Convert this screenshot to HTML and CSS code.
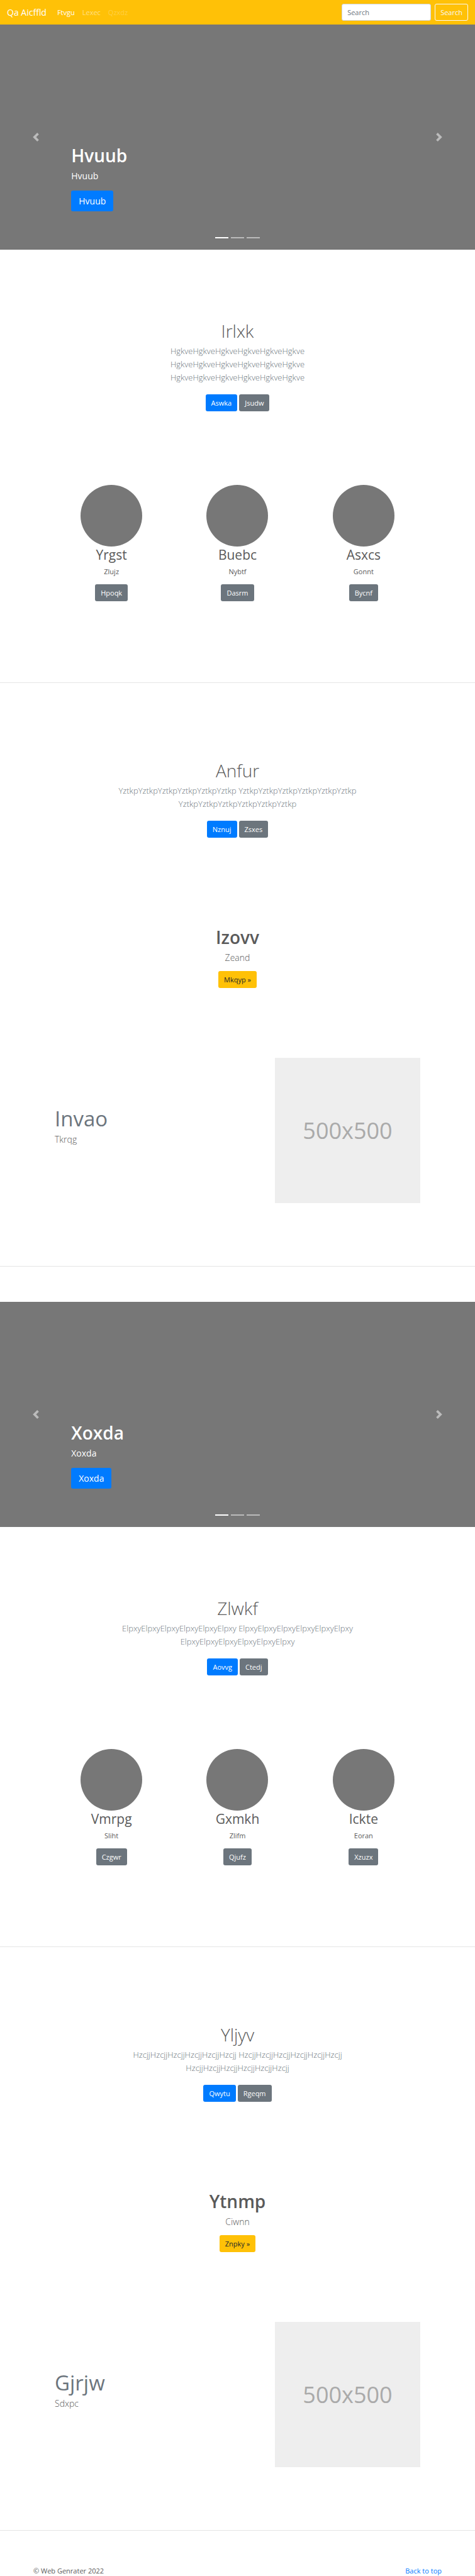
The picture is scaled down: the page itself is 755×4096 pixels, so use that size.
FILE: index.html
```html
<!DOCTYPE html>
<html lang="en">
<head>
<meta charset="utf-8">
<meta name="viewport" content="width=device-width, initial-scale=1">
<title>Qa Aicffld</title>
<link rel="stylesheet" href="styles.css">
</head>
<body>
<header class="navbar" id="top">
  <a class="brand" href="#">Qa Aicffld</a>
  <nav class="nav-links">
    <a class="nav-link active" href="#">Ftvgu</a>
    <a class="nav-link" href="#">Lexec</a>
    <a class="nav-link disabled" href="#">Qzxdz</a>
  </nav>
  <form class="search">
    <input class="search-input" type="search" placeholder="Search" aria-label="Search">
    <button class="btn btn-outline" type="button">Search</button>
  </form>
</header>
<main>
  <section class="carousel">
    <button class="carousel-control prev" type="button" aria-label="Previous">
      <svg class="chevron" viewBox="0 0 8 8"><path d="M5.25 0l-4 4 4 4 1.5-1.5L4.25 4l2.5-2.5L5.25 0z"/></svg>
    </button>
    <div class="caption">
      <h1 class="caption-title">Hvuub</h1>
      <p class="caption-text">Hvuub</p>
      <a class="btn btn-primary btn-lg" href="#">Hvuub</a>
    </div>
    <button class="carousel-control next" type="button" aria-label="Next">
      <svg class="chevron" viewBox="0 0 8 8"><path d="M2.75 0l-1.5 1.5L3.75 4l-2.5 2.5L2.75 8l4-4-4-4z"/></svg>
    </button>
    <div class="indicators"><span class="bar on"></span><span class="bar"></span><span class="bar"></span></div>
  </section>

  <section class="intro after-carousel">
    <h1 class="title light">Irlxk</h1>
    <p class="lead muted">HgkveHgkveHgkveHgkveHgkveHgkve HgkveHgkveHgkveHgkveHgkveHgkve HgkveHgkveHgkveHgkveHgkveHgkve</p>
    <div class="actions"><a class="btn btn-primary" href="#">Aswka</a><a class="btn btn-secondary" href="#">Jsudw</a></div>
  </section>

  <section class="trio">
    <article class="member"><div class="avatar"></div><h2 class="member-name">Yrgst</h2><p class="member-text">Zlujz</p><a class="btn btn-secondary" href="#">Hpoqk</a></article>
    <article class="member"><div class="avatar"></div><h2 class="member-name">Buebc</h2><p class="member-text">Nybtf</p><a class="btn btn-secondary" href="#">Dasrm</a></article>
    <article class="member"><div class="avatar"></div><h2 class="member-name">Asxcs</h2><p class="member-text">Gonnt</p><a class="btn btn-secondary" href="#">Bycnf</a></article>
  </section>
  <hr class="rule">

  <section class="intro after-rule">
    <h1 class="title light">Anfur</h1>
    <p class="lead muted">YztkpYztkpYztkpYztkpYztkpYztkp YztkpYztkpYztkpYztkpYztkpYztkp YztkpYztkpYztkpYztkpYztkpYztkp</p>
    <div class="actions"><a class="btn btn-primary" href="#">Nznuj</a><a class="btn btn-secondary" href="#">Zsxes</a></div>
  </section>

  <section class="callout">
    <h1 class="title strong">Izovv</h1>
    <p class="lead">Zeand</p>
    <a class="btn btn-warning" href="#">Mkqyp »</a>
  </section>

  <section class="featurette">
    <div class="featurette-copy">
      <h2 class="featurette-title">Invao</h2>
      <p class="lead">Tkrqg</p>
    </div>
    <div class="placeholder">500x500</div>
  </section>
  <hr class="rule">

  <section class="carousel spaced">
    <button class="carousel-control prev" type="button" aria-label="Previous">
      <svg class="chevron" viewBox="0 0 8 8"><path d="M5.25 0l-4 4 4 4 1.5-1.5L4.25 4l2.5-2.5L5.25 0z"/></svg>
    </button>
    <div class="caption">
      <h1 class="caption-title">Xoxda</h1>
      <p class="caption-text">Xoxda</p>
      <a class="btn btn-primary btn-lg" href="#">Xoxda</a>
    </div>
    <button class="carousel-control next" type="button" aria-label="Next">
      <svg class="chevron" viewBox="0 0 8 8"><path d="M2.75 0l-1.5 1.5L3.75 4l-2.5 2.5L2.75 8l4-4-4-4z"/></svg>
    </button>
    <div class="indicators"><span class="bar on"></span><span class="bar"></span><span class="bar"></span></div>
  </section>

  <section class="intro after-carousel">
    <h1 class="title light">Zlwkf</h1>
    <p class="lead muted">ElpxyElpxyElpxyElpxyElpxyElpxy ElpxyElpxyElpxyElpxyElpxyElpxy ElpxyElpxyElpxyElpxyElpxyElpxy</p>
    <div class="actions"><a class="btn btn-primary" href="#">Aovvg</a><a class="btn btn-secondary" href="#">Ctedj</a></div>
  </section>

  <section class="trio">
    <article class="member"><div class="avatar"></div><h2 class="member-name">Vmrpg</h2><p class="member-text">Sliht</p><a class="btn btn-secondary" href="#">Czgwr</a></article>
    <article class="member"><div class="avatar"></div><h2 class="member-name">Gxmkh</h2><p class="member-text">Zlifm</p><a class="btn btn-secondary" href="#">Qjufz</a></article>
    <article class="member"><div class="avatar"></div><h2 class="member-name">Ickte</h2><p class="member-text">Eoran</p><a class="btn btn-secondary" href="#">Xzuzx</a></article>
  </section>
  <hr class="rule">

  <section class="intro after-rule">
    <h1 class="title light">Yljyv</h1>
    <p class="lead muted">HzcjjHzcjjHzcjjHzcjjHzcjjHzcjj HzcjjHzcjjHzcjjHzcjjHzcjjHzcjj HzcjjHzcjjHzcjjHzcjjHzcjjHzcjj</p>
    <div class="actions"><a class="btn btn-primary" href="#">Qwytu</a><a class="btn btn-secondary" href="#">Rgeqm</a></div>
  </section>

  <section class="callout">
    <h1 class="title strong">Ytnmp</h1>
    <p class="lead">Ciwnn</p>
    <a class="btn btn-warning" href="#">Znpky »</a>
  </section>

  <section class="featurette">
    <div class="featurette-copy">
      <h2 class="featurette-title">Gjrjw</h2>
      <p class="lead">Sdxpc</p>
    </div>
    <div class="placeholder">500x500</div>
  </section>
  <hr class="rule">
</main>
<footer class="footer">
  <span>© Web Genrater 2022</span>
  <a class="footer-link" href="#top">Back to top</a>
</footer>
</body>
</html>
```

FILE: styles.css
```css
*, *::before, *::after { box-sizing: border-box; }

body {
  margin: 0;
  background: #fff;
  color: #5a5a5a;
  font-family: "Open Sans", "Noto Sans", sans-serif;
  font-size: 11px;
  line-height: 17px;
}

h1, h2, p { margin: 0; }
a { text-decoration: none; }

/* Navbar */
.navbar {
  display: flex;
  align-items: center;
  padding: 6px 11px;
  background: #ffc107;
}
.brand { margin-right: 11px; color: #fff; font-size: 14px; line-height: 21px; }
.nav-links { display: flex; flex: 1; }
.nav-link { padding: 5px 6px; color: rgba(255, 255, 255, .5); }
.nav-link.active { color: #fff; }
.nav-link.disabled { color: rgba(255, 255, 255, .25); }
.search { display: flex; gap: 6px; }
.search-input {
  width: 142px;
  padding: 4px 8px;
  border: 1px solid #ced4da;
  border-radius: 3px;
  background: #fff;
  color: #495057;
  font: inherit;
  appearance: none;
}
.search-input::placeholder { color: #6c757d; opacity: 1; }

/* Buttons */
.btn {
  display: inline-block;
  padding: 4px 8px;
  border: 1px solid transparent;
  border-radius: 3px;
  color: #fff;
  font: inherit;
}
.btn-primary { background: #007bff; }
.btn-secondary { background: #6c757d; }
.btn-warning { background: #ffc107; color: #212529; }
.btn-outline { background: transparent; border-color: #f8f9fa; color: #f8f9fa; }
.btn-lg { padding: 5px 11px; font-size: 14px; line-height: 21px; }

/* Carousel */
.carousel {
  position: relative;
  display: flex;
  min-height: 358px;
  background: #777;
}
.carousel.spaced { margin-top: 56px; }
.carousel-control {
  display: flex;
  align-items: center;
  justify-content: center;
  width: 15%;
  padding: 0;
  border: 0;
  background: none;
  opacity: .5;
}
.chevron { width: 14px; height: 14px; fill: #fff; }
.caption {
  display: flex;
  flex: 1;
  flex-direction: column;
  align-items: flex-start;
  justify-content: flex-end;
  padding-bottom: 61px;
  color: #fff;
}
.caption-title { margin-bottom: 5px; font-size: 28px; font-weight: 600; line-height: 34px; }
.caption-text { margin-bottom: 13px; font-size: 14px; line-height: 21px; }
.indicators {
  position: absolute;
  right: 0;
  bottom: 18px;
  left: 0;
  display: flex;
  justify-content: center;
  gap: 4px;
}
.bar { width: 21px; height: 2px; background: #fff; opacity: .5; }
.bar.on { opacity: 1; }

/* Text sections */
.intro { max-width: 404px; margin: 0 auto; text-align: center; }
.after-carousel { padding: 112px 0 117px; }
.after-rule { padding: 122px 0 141px; }
.title { margin-bottom: 5px; font-size: 28px; line-height: 34px; }
.light { font-weight: 300; }
.strong { font-weight: 600; }
.lead { font-size: 14px; font-weight: 300; line-height: 21px; }
.muted { color: #6c757d; font-size: 13px; }
.actions { display: flex; justify-content: center; gap: 3px; margin-top: 16px; }
.callout { padding-bottom: 111px; text-align: center; }
.callout .lead { margin-bottom: 11px; }

/* Three columns */
.trio {
  display: grid;
  grid-template-columns: repeat(3, 1fr);
  padding: 0 77px 129px;
  text-align: center;
}
.avatar { width: 98px; height: 98px; margin: 0 auto; border-radius: 50%; background: #777; }
.member-name { margin-bottom: 5px; font-size: 21px; font-weight: 400; line-height: 26px; }
.member-text { margin-bottom: 12px; }

.rule { height: 1px; margin: 0; border: 0; background: rgba(0, 0, 0, .1); }

/* Featurette */
.featurette {
  display: grid;
  grid-template-columns: 1fr 231px;
  padding: 0 87px 100px;
}
.featurette-copy { padding-top: 79px; }
.featurette-title {
  margin-bottom: 5px;
  color: #6c757d;
  font-size: 33px;
  font-weight: 400;
  line-height: 35px;
}
.placeholder {
  display: flex;
  align-items: center;
  justify-content: center;
  aspect-ratio: 1;
  background: #eee;
  color: #aaa;
  font-size: 36px;
}

/* Footer */
.footer { display: flex; justify-content: space-between; padding: 55px 53px 0; }
.footer-link { color: #007bff; }
```
